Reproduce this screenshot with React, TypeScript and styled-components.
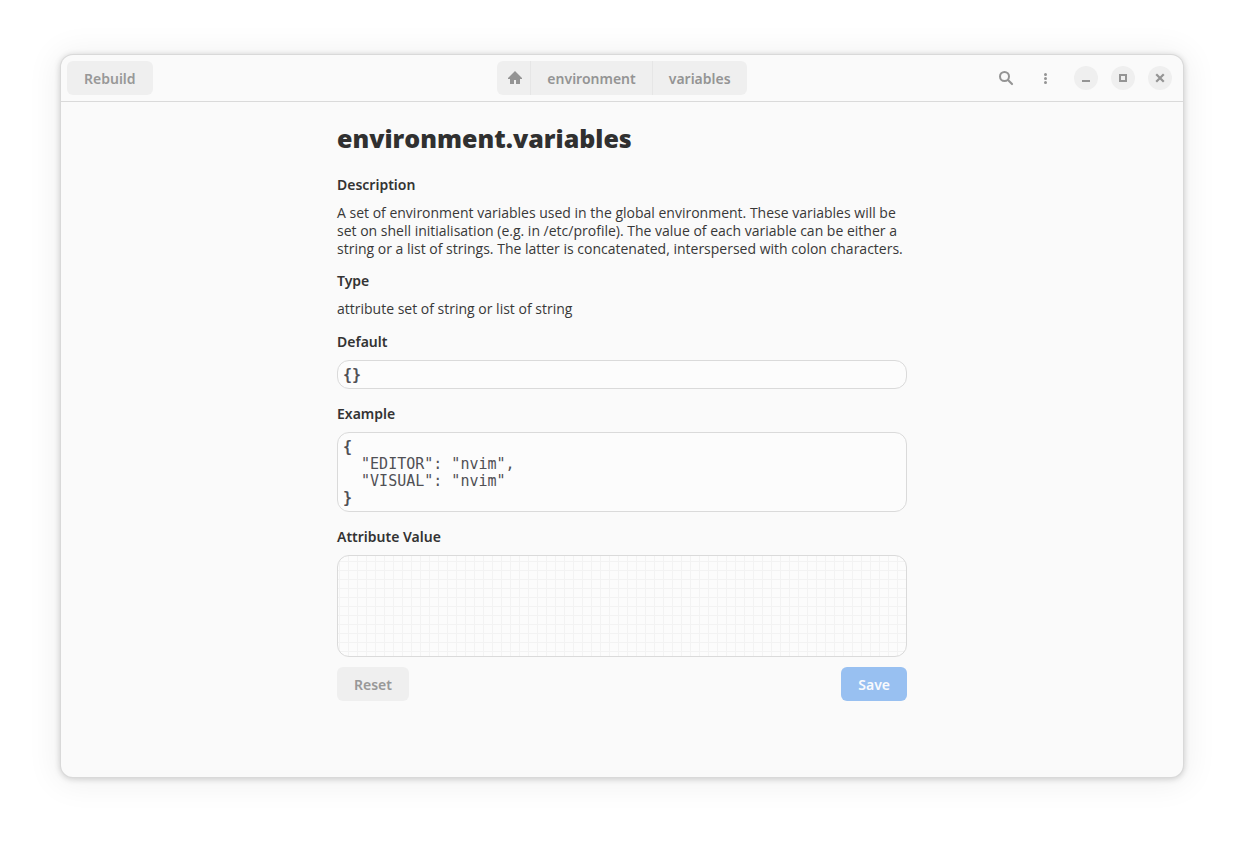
import React from 'react';
import styled, { createGlobalStyle } from 'styled-components';

const GlobalStyle = createGlobalStyle`
  * { box-sizing: border-box; }
  body {
    margin: 0;
    background: #ffffff;
    color: #383838;
    font: 400 14px/18px "Noto Sans", "Open Sans", sans-serif;
  }
  button, textarea { font: inherit; color: inherit; border: 0; margin: 0; }
  h1, h2, p, pre { margin: 0; }
`;

const Desktop = styled.div`
  display: flex;
  min-height: 100vh;
  padding: 55px 61px 67px;
`;

const Window = styled.div`
  flex: 1;
  display: flex;
  flex-direction: column;
  min-width: 0;
  border-radius: 12px;
  background: #fafafa;
  box-shadow: 0 0 0 1px #d9d9d9, 0 1px 6px 1px rgba(0, 0, 0, 0.18), 0 2px 32px 6px rgba(0, 0, 0, 0.06);
`;

const HeaderBar = styled.header`
  display: grid;
  grid-template-columns: 1fr auto 1fr;
  align-items: center;
  height: 47px;
  padding: 0 6px;
  border-bottom: 1px solid #dadada;
  color: #949494;
`;

const Button = styled.button<{ $primary?: boolean }>`
  height: 34px;
  padding: 2px 17px 0;
  border-radius: 6px;
  background: ${(p) => (p.$primary ? '#98c0f1' : '#efefef')};
  color: ${(p) => (p.$primary ? '#f8fafd' : '#989898')};
  font-weight: 600;
`;

const Path = styled.nav`
  display: flex;
  height: 34px;
  border-radius: 6px;
  background: #efefef;
  overflow: hidden;
`;

const Crumb = styled.button<{ $icon?: boolean }>`
  display: flex;
  align-items: center;
  justify-content: center;
  padding: ${(p) => (p.$icon ? '0 7px 0 10px' : '2px 16px 0')};
  background: transparent;
  font-weight: 600;
  & + & { border-left: 1px solid #e6e6e6; }
`;

const Start = styled.div`
  display: flex;
`;

const End = styled.div`
  display: flex;
  align-items: center;
  justify-content: flex-end;
  gap: 5px;
  padding-right: 5px;
`;

const IconButton = styled.button`
  display: flex;
  align-items: center;
  justify-content: center;
  width: 34px;
  height: 34px;
  padding: 0;
  background: transparent;
`;

const WindowControls = styled.div`
  display: flex;
  gap: 13px;
  margin-left: 7px;
`;

const ControlButton = styled(IconButton)`
  width: 24px;
  height: 24px;
  border-radius: 50%;
  background: #efefef;
`;

const Page = styled.main`
  width: 100%;
  max-width: 570px;
  margin: 0 auto;
  padding: 20px 0 24px;
`;

const Title = styled.h1`
  font-family: "Open Sans", "Noto Sans", sans-serif;
  font-size: 25px;
  line-height: 32px;
  font-weight: 800;
  margin-bottom: 22px;
  color: #303030;
`;

const Section = styled.section<{ $boxed?: boolean }>`
  display: flex;
  flex-direction: column;
  gap: ${(p) => (p.$boxed ? '9px' : '10px')};
  padding-top: ${(p) => (p.$boxed ? '1px' : '0')};
`;

const Heading = styled.h2`
  font-size: 14px;
  line-height: 18px;
  font-weight: 600;
  color: #333333;
`;

const Text = styled.p`
  margin-bottom: 14px;
  font-family: "Open Sans", "Noto Sans", sans-serif;
`;

const Code = styled.pre`
  margin-bottom: 15px;
  padding: 6px 5px 4px;
  border: 1px solid #dadada;
  border-radius: 12px;
  background: #fcfcfc;
  color: #505055;
  font-family: "DejaVu Sans Mono", monospace;
  font-size: 15px;
  line-height: 17px;
`;

const Editor = styled.textarea`
  display: block;
  width: 100%;
  height: 102px;
  padding: 5px;
  resize: none;
  border: 1px solid #dadada;
  border-radius: 12px;
  background-color: #fcfcfc;
  background-image: linear-gradient(#f3f3f3 1px, transparent 1px),
    linear-gradient(90deg, #f3f3f3 1px, transparent 1px);
  background-size: 9px 9px;
  background-position: 1px 5px;
  font: 15px/17px "DejaVu Sans Mono", monospace;
`;

const Actions = styled.div`
  display: flex;
  justify-content: space-between;
  margin-top: 10px;
`;

const Icon = ({ children }: { children: React.ReactNode }) => (
  <svg width="16" height="16" viewBox="0 0 16 16" fill="currentColor" aria-hidden="true">
    {children}
  </svg>
);

export default function App() {
  return (
    <>
      <GlobalStyle />
      <Desktop>
        <Window>
          <HeaderBar>
            <Start>
              <Button type="button">Rebuild</Button>
            </Start>
            <Path aria-label="Attribute path">
              <Crumb type="button" $icon aria-label="Home">
                <Icon>
                  <path d="M8 1 1 8v1h2v5h4v-4h2v4h4V9h2V8Z" />
                </Icon>
              </Crumb>
              <Crumb type="button">environment</Crumb>
              <Crumb type="button">variables</Crumb>
            </Path>
            <End>
              <IconButton type="button" aria-label="Search">
                <Icon>
                  <circle cx="6.5" cy="6.5" r="4.5" fill="none" stroke="currentColor" strokeWidth="2" />
                  <path d="m10 10 4 4" fill="none" stroke="currentColor" strokeWidth="2.2" strokeLinecap="round" />
                </Icon>
              </IconButton>
              <IconButton type="button" aria-label="Menu">
                <Icon>
                  <circle cx="8.5" cy="4.5" r="1.5" />
                  <circle cx="8.5" cy="8.5" r="1.5" />
                  <circle cx="8.5" cy="12.5" r="1.5" />
                </Icon>
              </IconButton>
              <WindowControls>
                <ControlButton type="button" aria-label="Minimize">
                  <Icon>
                    <path d="M4 10h8v2H4z" />
                  </Icon>
                </ControlButton>
                <ControlButton type="button" aria-label="Maximize">
                  <Icon>
                    <path d="M4 4h8v8H4zM6 6v4h4V6z" fillRule="evenodd" />
                  </Icon>
                </ControlButton>
                <ControlButton type="button" aria-label="Close">
                  <Icon>
                    <path d="m5 5 6 6m0-6-6 6" fill="none" stroke="currentColor" strokeWidth="2.2" strokeLinecap="square" />
                  </Icon>
                </ControlButton>
              </WindowControls>
            </End>
          </HeaderBar>
          <Page>
            <Title>environment.variables</Title>
            <Section>
              <Heading>Description</Heading>
              <Text>
                A set of environment variables used in the global environment. These variables will be
                set on shell initialisation (e.g. in /etc/profile). The value of each variable can be either a
                string or a list of strings. The latter is concatenated, interspersed with colon characters.
              </Text>
            </Section>
            <Section>
              <Heading>Type</Heading>
              <Text>attribute set of string or list of string</Text>
            </Section>
            <Section $boxed>
              <Heading>Default</Heading>
              <Code><b>{'{}'}</b></Code>
            </Section>
            <Section $boxed>
              <Heading>Example</Heading>
              <Code>
                <b>{'{'}</b>
                {'\n  "EDITOR": "nvim",\n  "VISUAL": "nvim"\n'}
                <b>{'}'}</b>
              </Code>
            </Section>
            <Section $boxed>
              <Heading as="label" htmlFor="value">Attribute Value</Heading>
              <Editor id="value" spellCheck={false} />
            </Section>
            <Actions>
              <Button type="button">Reset</Button>
              <Button type="button" $primary>Save</Button>
            </Actions>
          </Page>
        </Window>
      </Desktop>
    </>
  );
}
